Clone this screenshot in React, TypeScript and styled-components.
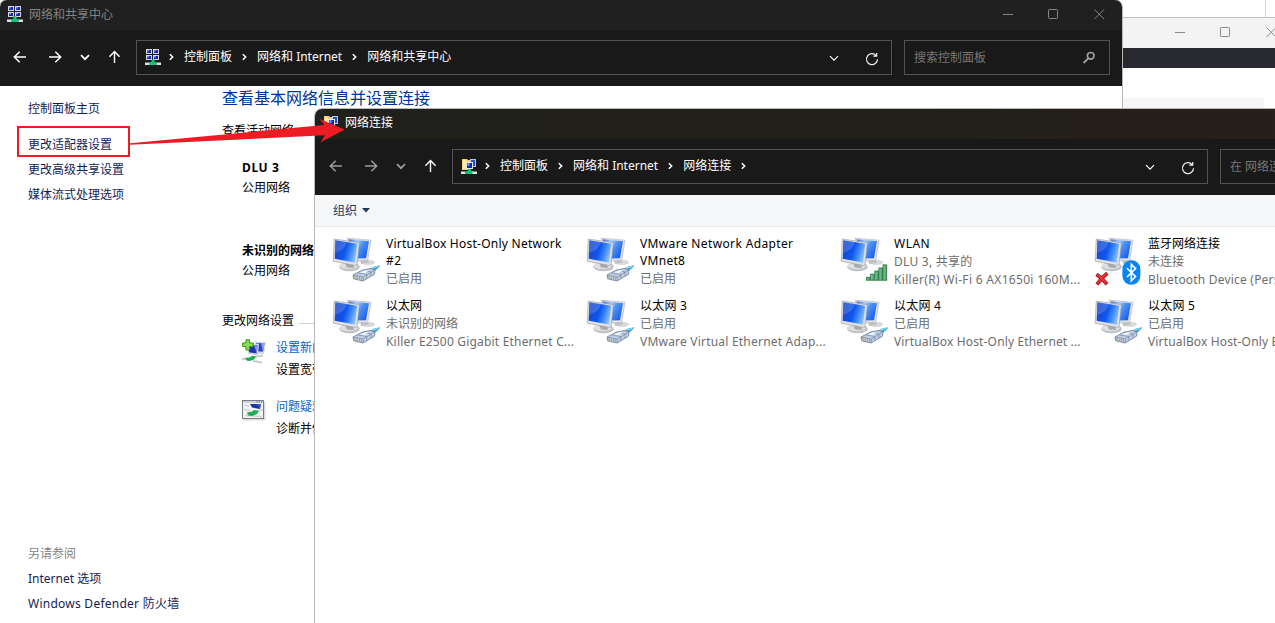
import React from "react";
import styled, { createGlobalStyle } from "styled-components";

const Global = createGlobalStyle`
  * { box-sizing: border-box; }
  html, body { margin: 0; padding: 0; overflow: hidden; background: #fff; }
  body { font: 12px/18px "Noto Sans", "Noto Sans CJK SC", sans-serif; color: #000; }
`;

const Desktop = styled.div`
  position: relative;
  width: 1275px;
  height: 623px;
  overflow: hidden;
  background: #fff;
`;

/* ---------- windows ---------- */

const Window = styled.section<{ $x: number; $y: number; $w: number; $h: number }>`
  position: absolute;
  left: ${(p) => p.$x}px;
  top: ${(p) => p.$y}px;
  width: ${(p) => p.$w}px;
  height: ${(p) => p.$h}px;
  display: flex;
  flex-direction: column;
  overflow: hidden;
  background: #fff;
  border: 1px solid #b9b9b9;
  border-radius: 8px 8px 0 0;
`;

const TitleBar = styled.header<{ $bg: string; $active?: boolean }>`
  display: flex;
  align-items: center;
  flex: 0 0 30px;
  padding: 0 17px 2px ${(p) => (p.$active ? 8 : 7)}px;
  background: ${(p) => p.$bg};
  color: ${(p) => (p.$active ? "#fff" : "#828282")};
  > svg { flex: none; }
  > span {
    margin: 0 auto 0 6px;
    padding-top: ${(p) => (p.$active ? 0 : 1)}px;
  }
`;

const Controls = styled.div<{ $color: string }>`
  display: flex;
  align-items: center;
  gap: 35px;
  color: ${(p) => p.$color};
`;

const NavBar = styled.nav<{ $inset: number }>`
  display: flex;
  align-items: center;
  flex: 0 0 56px;
  padding: 0 12px 2px ${(p) => p.$inset}px;
  background: #191919;
  color: #fff;
`;

const NavButtons = styled.div`
  display: flex;
  align-items: center;
  width: 123px;
  flex: none;
  gap: 18px;
  svg { flex: none; }
  svg:first-child { margin-right: 3px; }
`;

const Box = styled.div`
  display: flex;
  align-items: center;
  height: 35px;
  border: 1px solid #535353;
`;

const AddressBox = styled(Box)`
  width: 756px;
  flex: none;
  padding: 0 12px 0 8px;
`;

const SearchBox = styled(Box)`
  width: 206px;
  flex: none;
  margin-left: 12px;
  padding: 1px 13px 0 9px;
  justify-content: space-between;
  color: #777;
  white-space: nowrap;
`;

const Crumbs = styled.div`
  display: flex;
  align-items: center;
  margin-right: auto;
  margin-left: 8px;
  svg { margin-right: 10px; flex: none; }
  span { margin-right: 10px; white-space: nowrap; }
`;

const AddressTools = styled.div`
  display: flex;
  align-items: center;
  gap: 26px;
  padding-top: 3px;
`;

/* ---------- network center body ---------- */

const CenterBody = styled.div`
  display: flex;
  flex: 1;
  min-height: 0;
`;

const Sidebar = styled.aside`
  display: flex;
  flex-direction: column;
  width: 221px;
  flex: none;
  height: 538px;
  padding: 14px 0 11px 28px;
`;

const SideLink = styled.a<{ $gap?: number; $muted?: boolean; $track?: number }>`
  line-height: 18px;
  margin-top: ${(p) => p.$gap ?? 7}px;
  color: ${(p) => (p.$muted ? "#838383" : "#151c55")};
  letter-spacing: ${(p) => p.$track ?? 0}px;
`;

const Spacer = styled.div`
  flex: 1;
`;

const Main = styled.main`
  display: flex;
  flex-direction: column;
  flex: 1;
  padding: 0 0 0 1px;
`;

const Heading = styled.h1`
  margin: 0;
  font-size: 16px;
  font-weight: 400;
  line-height: 24px;
  color: #003399;
`;

const SectionTitle = styled.div<{ $gap: number }>`
  display: flex;
  align-items: center;
  gap: 5px;
  margin-top: ${(p) => p.$gap}px;
  white-space: nowrap;
  &::after { content: ""; flex: 1; height: 1px; margin-top: 4px; background: #d0d0d0; }
`;

const NetworkEntry = styled.div<{ $gap: number }>`
  display: flex;
  flex-direction: column;
  margin: ${(p) => p.$gap}px 0 0 20px;
  gap: 2px;
`;

const NetworkName = styled.strong<{ $track?: number }>`
  letter-spacing: ${(p) => p.$track ?? 0}px;
`;

const Task = styled.div<{ $gap: number }>`
  display: flex;
  margin: ${(p) => p.$gap}px 0 0 20px;
  gap: 9px;
  > svg { flex: none; }
`;

const TaskText = styled.div`
  display: flex;
  flex-direction: column;
  gap: 4px;
  white-space: nowrap;
  a { color: #0066cc; }
`;

/* ---------- connections body ---------- */

const CommandBar = styled.div`
  display: flex;
  align-items: center;
  flex: 0 0 32px;
  gap: 5px;
  padding-left: 18px;
  background: #f5f6f8;
  border-bottom: 1px solid #e9eaec;
  color: #1e395b;
`;

const Grid = styled.div`
  display: grid;
  grid-template-columns: repeat(4, 254px);
  grid-auto-rows: 62px;
  padding: 6px 0 0 16px;
`;

const Item = styled.article`
  display: flex;
  gap: 3px;
  > svg { flex: none; }
`;

const ItemText = styled.div`
  display: flex;
  flex-direction: column;
  padding-top: 2px;
  white-space: nowrap;
`;

const NameLine = styled.span<{ $track?: number }>`
  line-height: 17px;
  letter-spacing: ${(p) => p.$track ?? 0}px;
`;

const Info = styled.div`
  display: flex;
  flex-direction: column;
  margin-top: 1px;
  color: #6d6d6d;
`;

const InfoLine = styled.span<{ $track?: number }>`
  line-height: 18px;
  letter-spacing: ${(p) => p.$track ?? 0}px;
`;

/* ---------- background window ---------- */

const Backdrop = styled.div`
  position: absolute;
  left: 1100px;
  top: 0;
  width: 175px;
  height: 120px;
  display: flex;
  flex-direction: column;
`;

const BackTop = styled.div`
  height: 17px;
  width: 166px;
  border-right: 1px solid #d4d4d4;
`;

const BackTitle = styled.div`
  display: flex;
  align-items: center;
  height: 31px;
  padding: 0 0 1px 74px;
  background: #f3f3f3;
  border-top: 1px solid #c2c2c2;
`;

const BackBar = styled.div`
  height: 20px;
  background: #292a2f;
`;

const BackPanel = styled.div`
  width: 164px;
  height: 22px;
  margin-top: 30px;
  background: #f6f6f6;
  border-radius: 3px;
`;

/* ---------- annotation ---------- */

const Annotation = styled.svg`
  position: absolute;
  left: 0;
  top: 0;
  pointer-events: none;
`;

/* ---------- icons ---------- */

const Glyph = ({ children }: { children: React.ReactNode }) => (
  <svg width="11" height="11" fill="none" stroke="currentColor" overflow="visible">{children}</svg>
);

const WindowControls = ({ color }: { color: string }) => (
  <Controls $color={color}>
    <Glyph><path d="M1 5.5h10" /></Glyph>
    <Glyph><rect x=".5" y=".5" width="9" height="9" rx=".8" /></Glyph>
    <Glyph><path d="M.5.5l9.5 9.5M10 .5L.5 10" /></Glyph>
  </Controls>
);

const Arrow = ({ dir, color }: { dir: "left" | "right"; color: string }) => (
  <svg width="14" height="14" fill="none" stroke={color} strokeWidth="1.5">
    {dir === "left" ? <path d="M13 7H1.5M6.7 1.7L1.3 7l5.4 5.3" /> : <path d="M1 7h11.5M7.3 1.7L12.7 7l-5.4 5.3" />}
  </svg>
);

const ChevronDown = ({ color = "#fff", heavy }: { color?: string; heavy?: boolean }) => (
  <svg width="10" height="7" fill="none" stroke={color} strokeWidth={heavy ? 1.7 : 1.2}><path d="M1 1.2l4 4 4-4" /></svg>
);

const ChevronRight = () => (
  <svg width="5" height="8" fill="none" stroke="#fff" strokeWidth="1.5"><path d="M.8 1.2L3.7 4 .8 6.8" /></svg>
);

const UpArrow = () => (
  <svg width="14" height="14" fill="none" stroke="#fff" strokeWidth="1.4"><path d="M6.5 13V1.5M1.4 6.8l5.1-5.4 5.1 5.4" /></svg>
);

const Refresh = () => (
  <svg width="14" height="14" fill="none" stroke="#f0f0f0" strokeWidth="1.2">
    <path d="M11.2 3.6A5.5 5.5 0 1 0 12.5 7.2M11.7 1v3.2H8.3" />
  </svg>
);

const SearchIcon = () => (
  <svg width="14" height="14" fill="none" stroke="#a0a0a0"><circle cx="8.7" cy="4.8" r="3.3" strokeWidth="1.7" /><path d="M6.2 7.4L1.6 12" strokeWidth="1.9" /></svg>
);

const CenterIcon = () => (
  <svg width="16" height="17" viewBox="0 0 16 17">
    {[[1, 0], [8, 0], [1, 6], [8, 6]].map(([x, y]) => (
      <g key={`${x}-${y}`}>
        <rect x={x} y={y} width="6" height="5" fill="#d5d8e0" />
        <rect x={x + 1} y={y + 1} width="4" height="3" fill="#1a26b4" />
        <rect x={x + 1} y={y + 1} width="2" height="1.5" fill="#7182e6" />
      </g>
    ))}
    <path d="M6.5 10.5h3V13h2v3h-7v-3h2z" fill="#10c478" />
    <path d="M0 13.5h4.5V16H0zM11.5 13.5H16V16h-4.5z" fill="#dbe0e0" />
  </svg>
);

const FolderNetIcon = () => (
  <svg width="16" height="17" viewBox="0 0 16 17">
    <path d="M1 1h5l1 1h2v10H1z" fill="#efd27a" />
    <path d="M2 2h3v9H2z" fill="#fbe9a4" />
    <path d="M9 1h6v8H9z" fill="#b8c6e2" />
    <path d="M10 2h4v6h-4z" fill="#2b4fc8" />
    <path d="M5 4h7v7H5z" fill="#e1e7f2" />
    <path d="M6 5h5v5H6z" fill="#0f26bb" />
    <path d="M6.5 5h2v3h-2z" fill="#7795f2" />
    <path d="M7 11h3v2h2v3H5v-3h2z" fill="#10c07a" />
    <path d="M0 13.5h4.5V16H0zM11.5 13.5H16V16h-4.5z" fill="#e2e6e6" />
  </svg>
);

const Monitors = () => (
  <>
    <ellipse cx="38" cy="28.3" rx="7" ry="2.6" fill="#d8d9db" />
    <path d="M30 25l7 .5 2 3-8 1.5z" fill="#bfc1c4" />
    <path d="M17 4.2L41 6.2 37.7 26.5 27 27z" fill="#e2e3e5" stroke="#aeb0b3" strokeWidth=".6" />
    <path d="M18.5 5.2L39 7.2 36 24.2 26 24.5z" fill="url(#screenBack)" />
    <ellipse cx="19.5" cy="32.7" rx="10.3" ry="4.5" fill="#bfc1c3" />
    <ellipse cx="18.8" cy="31.7" rx="9" ry="3.6" fill="#dedfe1" />
    <path d="M15 28l8 1.5 1 4.5-7-.5z" fill="#a7a9ac" />
    <path d="M4.2 5L28.3 8.5 29.3 9.5 27 31l-1.5.6L3.2 27.2z" fill="#dfe0e2" stroke="#96989b" strokeWidth=".6" />
    <path d="M5.3 6.3L27.2 9.7 25 28.5 4.7 24.7z" fill="url(#screen)" />
    <path d="M5.3 6.3l12 1.8Q14 17 5 19z" fill="#fff" opacity=".16" />
  </>
);

const Plug = () => (
  <g>
    <path d="M38 36l6-3.6 6.5-1.2-2.8 3.4L42 39z" fill="#3aa5d4" />
    <path d="M42 34.4l6-2" stroke="#8fdcf2" strokeWidth="1.2" />
    <path d="M23 41l9.5-5 8-1.5 4.5 1.3-.5 4.4L33 47l-9.3-2.2z" fill="#c3cfdf" stroke="#6379a0" strokeWidth=".8" />
    <path d="M23.3 41l10 2L44.6 36M33.3 43v3.8M27.5 38.8l9.3 1.8v3.8M32 36.4l9 1.6v4" fill="none" stroke="#6e87ad" strokeWidth=".7" />
    <path d="M25 42.2v2.3M27.2 42.6v2.4M29.4 43v2.5M31.4 43.4v2.4" stroke="#a9a152" strokeWidth="1" />
    <path d="M30 38.4l5-2.3 4 .7-4.6 2.4z" fill="#eef4fb" />
  </g>
);

const Signal = () => (
  <g fill="url(#bars)" stroke="#2d7a48" strokeWidth=".9">
    {[0, 1, 2, 3, 4].map((i) => (
      <rect key={i} x={28.5 + i * 4.15} y={43.3 - i * 3.1} width="3.6" height={2.9 + i * 3.1} />
    ))}
  </g>
);

const Bluetooth = () => (
  <g>
    <rect x="30.4" y="26.2" width="18" height="24.6" rx="9" fill="#0a84f2" />
    <path d="M35 34.2l8.6 8.4-4.3 4.2V30.4l4.3 4.2-8.6 8.4" fill="none" stroke="#fff" strokeWidth="1.6" />
    <path d="M4.5 40.2Q10 44 15 50.3M15.3 39.3Q9 44 5 50.5" fill="none" stroke="#a51218" strokeWidth="3.8" />
    <path d="M4.8 40.2Q10 44 14.6 49.8M14.8 39.5Q9 44 5.2 50" fill="none" stroke="#e2343a" strokeWidth="2.2" />
  </g>
);

const NewConnectionIcon = () => (
  <svg width="25" height="26" viewBox="0 0 25 26">
    <path d="M13 2.5L24 3l-2 12h-7z" fill="#d4d9e4" />
    <path d="M14 4l8.5.3L21 12.5h-5z" fill="#2c42c4" />
    <path d="M19 4l3.5.3L21 12.5z" fill="#8fa4f0" />
    <path d="M5 4l12 .8L16 16.5 6 15z" fill="#d4d9e4" />
    <path d="M6.5 5.5l9 .8-.8 8.2-7.7-1.2z" fill="#2233b0" />
    <path d="M12 6l3.5.3-.8 8.2z" fill="#7c90ec" />
    <path d="M0 20.5l6-1.5M12 18l9-1.5M11 22l9 1.5" stroke="#c6cccf" strokeWidth="2.2" />
    <path d="M3 19.5l5-1.3 2-1.4 4 1-2 2.6-4 1.6-3-.3z" fill="#1fae50" />
    <path d="M4 .8h3.6V4h3.6v3.6H7.600V11H4V7.600H.6V4H4z" fill="#8fdc50" stroke="#2c9424" />
  </svg>
);

const TroubleshootIcon = () => (
  <svg width="25" height="26" viewBox="0 0 25 26">
    <rect x="1.500" y="4" width="22" height="18.500" fill="#bbb" opacity=".5" />
    <rect x=".5" y="2.500" width="21" height="18" fill="#f3f4f4" stroke="#777d84" />
    <path d="M1 4h20" stroke="#d0d4da" strokeWidth="2" />
    <path d="M14.500 4h1M16.800 4h1M19 4h1" stroke="#444" />
    <path d="M8 6h11l-1 5-8-1.500z" fill="#1c349f" />
    <path d="M14 6h5l-1 4z" fill="#3d5cd0" />
    <path d="M2 7l5 1M2 11.500l6 1M14 13l7-1M3 17.500l17 1" stroke="#d0d4d5" strokeWidth="1.600" />
    <path d="M5 14.500l5-1 2-1.500 5 1-2 3-5 2-4-.5z" fill="#24ad56" />
  </svg>
);

/* ---------- pieces ---------- */

const Navigation = ({ icon, crumbs, dim, trailing, search }: {
  icon: React.ReactNode; crumbs: string[]; dim?: boolean; trailing?: boolean; search: string;
}) => {
  const c = dim ? "#9c9c9c" : "#fff";
  return (
    <NavBar $inset={dim ? 14 : 13}>
      <NavButtons>
        <Arrow dir="left" color={c} />
        <Arrow dir="right" color={c} />
        <ChevronDown color={c} heavy />
        <UpArrow />
      </NavButtons>
      <AddressBox>
        {icon}
        <Crumbs>
          {crumbs.map((t) => (
            <React.Fragment key={t}>
              <ChevronRight />
              <span>{t}</span>
            </React.Fragment>
          ))}
          {trailing && <ChevronRight />}
        </Crumbs>
        <AddressTools>
          <ChevronDown />
          <Refresh />
        </AddressTools>
      </AddressBox>
      <SearchBox>
        <span>{search}</span>
        <SearchIcon />
      </SearchBox>
    </NavBar>
  );
};

type Kind = "plug" | "wifi" | "bluetooth";
type Label = [text: string, track?: number];
const adapters: { kind: Kind; name: Label[]; info: Label[] }[] = [
  { kind: "plug", name: [["VirtualBox Host-Only Network", 0.25], ["#2", 0.4]], info: [["已启用"]] },
  { kind: "plug", name: [["VMware Network Adapter", 0.36], ["VMnet8", 0.3]], info: [["已启用"]] },
  { kind: "wifi", name: [["WLAN", 0.5]], info: [["DLU 3, 共享的", 0.25], ["Killer(R) Wi-Fi 6 AX1650i 160M...", 0.31]] },
  { kind: "bluetooth", name: [["蓝牙网络连接"]], info: [["未连接"], ["Bluetooth Device (Personal Ar...", 0.2]] },
  { kind: "plug", name: [["以太网"]], info: [["未识别的网络"], ["Killer E2500 Gigabit Ethernet C...", 0.19]] },
  { kind: "plug", name: [["以太网 3", 0.2]], info: [["已启用"], ["VMware Virtual Ethernet Adap...", 0.21]] },
  { kind: "plug", name: [["以太网 4", 0.2]], info: [["已启用"], ["VirtualBox Host-Only Ethernet ...", 0.15]] },
  { kind: "plug", name: [["以太网 5", 0.2]], info: [["已启用"], ["VirtualBox Host-Only Ethernet ...", 0.15]] },
];

export default function App() {
  return (
    <Desktop>
      <Global />
      <Backdrop>
        <BackTop />
        <BackTitle><WindowControls color="#8a8a8a" /></BackTitle>
        <BackBar />
        <BackPanel />
      </Backdrop>

      <Window $x={-1} $y={-1} $w={1124} $h={640}>
        <TitleBar $bg="#202020">
          <CenterIcon />
          <span>网络和共享中心</span>
          <WindowControls color="#858585" />
        </TitleBar>
        <Navigation icon={<CenterIcon />} crumbs={["控制面板", "网络和 Internet", "网络和共享中心"]} search="搜索控制面板" />
        <CenterBody>
          <Sidebar>
            <SideLink $gap={0}>控制面板主页</SideLink>
            <SideLink $gap={18}>更改适配器设置</SideLink>
            <SideLink>更改高级共享设置</SideLink>
            <SideLink>媒体流式处理选项</SideLink>
            <Spacer />
            <SideLink $muted>另请参阅</SideLink>
            <SideLink>Internet 选项</SideLink>
            <SideLink $track={0.25}>Windows Defender 防火墙</SideLink>
          </Sidebar>
          <Main>
            <Heading>查看基本网络信息并设置连接</Heading>
            <SectionTitle $gap={12}>查看活动网络</SectionTitle>
            <NetworkEntry $gap={19}>
              <NetworkName $track={0.6}>DLU 3</NetworkName>
              <span>公用网络</span>
            </NetworkEntry>
            <NetworkEntry $gap={45}>
              <NetworkName>未识别的网络</NetworkName>
              <span>公用网络</span>
            </NetworkEntry>
            <SectionTitle $gap={32}>更改网络设置</SectionTitle>
            <Task $gap={9}>
              <NewConnectionIcon />
              <TaskText>
                <a>设置新的连接或网络</a>
                <span>设置宽带、拨号或 VPN 连接；设置路由器或接入点。</span>
              </TaskText>
            </Task>
            <Task $gap={19}>
              <TroubleshootIcon />
              <TaskText>
                <a>问题疑难解答</a>
                <span>诊断并修复网络问题，或者获得疑难解答信息。</span>
              </TaskText>
            </Task>
          </Main>
        </CenterBody>
      </Window>

      <Window $x={314} $y={108} $w={1125} $h={540}>
        <TitleBar $bg="linear-gradient(90deg, #20201c 0, #22201a 500px, #261f1b 960px)" $active>
          <FolderNetIcon />
          <span>网络连接</span>
        </TitleBar>
        <Navigation dim trailing icon={<FolderNetIcon />} crumbs={["控制面板", "网络和 Internet", "网络连接"]} search="在 网络连接 中搜索" />
        <CommandBar>
          <span>组织</span>
          <svg width="8" height="5"><path d="M0 0h8L4 4.5z" fill="#1e395b" /></svg>
        </CommandBar>
        <Grid>
          {adapters.map((a, i) => (
            <Item key={i}>
              <svg width="52" height="54" viewBox="0 0 52 54" overflow="visible">
                <defs>
                  <linearGradient id="screen" x1="0" y1="0.2" x2="1" y2="0.5">
                    <stop offset="0" stopColor="#1746c8" />
                    <stop offset=".5" stopColor="#0f56ee" />
                    <stop offset=".75" stopColor="#3f8af6" />
                    <stop offset="1" stopColor="#8cc0fb" />
                  </linearGradient>
                  <linearGradient id="screenBack" x1="0" y1="0" x2="1" y2="0.6">
                    <stop offset="0" stopColor="#3a62cc" />
                    <stop offset=".35" stopColor="#a9cdfb" />
                    <stop offset=".6" stopColor="#4f93f4" />
                    <stop offset="1" stopColor="#1d62ee" />
                  </linearGradient>
                  <linearGradient id="bars" x1="0" y1="0" x2="1" y2="0">
                    <stop offset="0" stopColor="#8fcfa4" />
                    <stop offset="1" stopColor="#3f9a5f" />
                  </linearGradient>
                </defs>
                <g transform="translate(-1 1)">
                  <Monitors />
                  {a.kind === "plug" && <Plug />}
                  {a.kind === "wifi" && <Signal />}
                  {a.kind === "bluetooth" && <Bluetooth />}
                </g>
              </svg>
              <ItemText>
                {a.name.map(([t, k]) => <NameLine key={t} $track={k}>{t}</NameLine>)}
                <Info>
                  {a.info.map(([t, k]) => <InfoLine key={t} $track={k}>{t}</InfoLine>)}
                </Info>
              </ItemText>
            </Item>
          ))}
        </Grid>
      </Window>

      <Annotation width="360" height="180">
        <rect x="18" y="127" width="111" height="29" fill="none" stroke="#ed1c24" strokeWidth="2" />
        <path d="M130 143.200L324.500 125l-5.200-6.300 25.500 10.800-24.500 13 4.700-7.200L130 144.800z" fill="#ed1c24" />
      </Annotation>
    </Desktop>
  );
}
